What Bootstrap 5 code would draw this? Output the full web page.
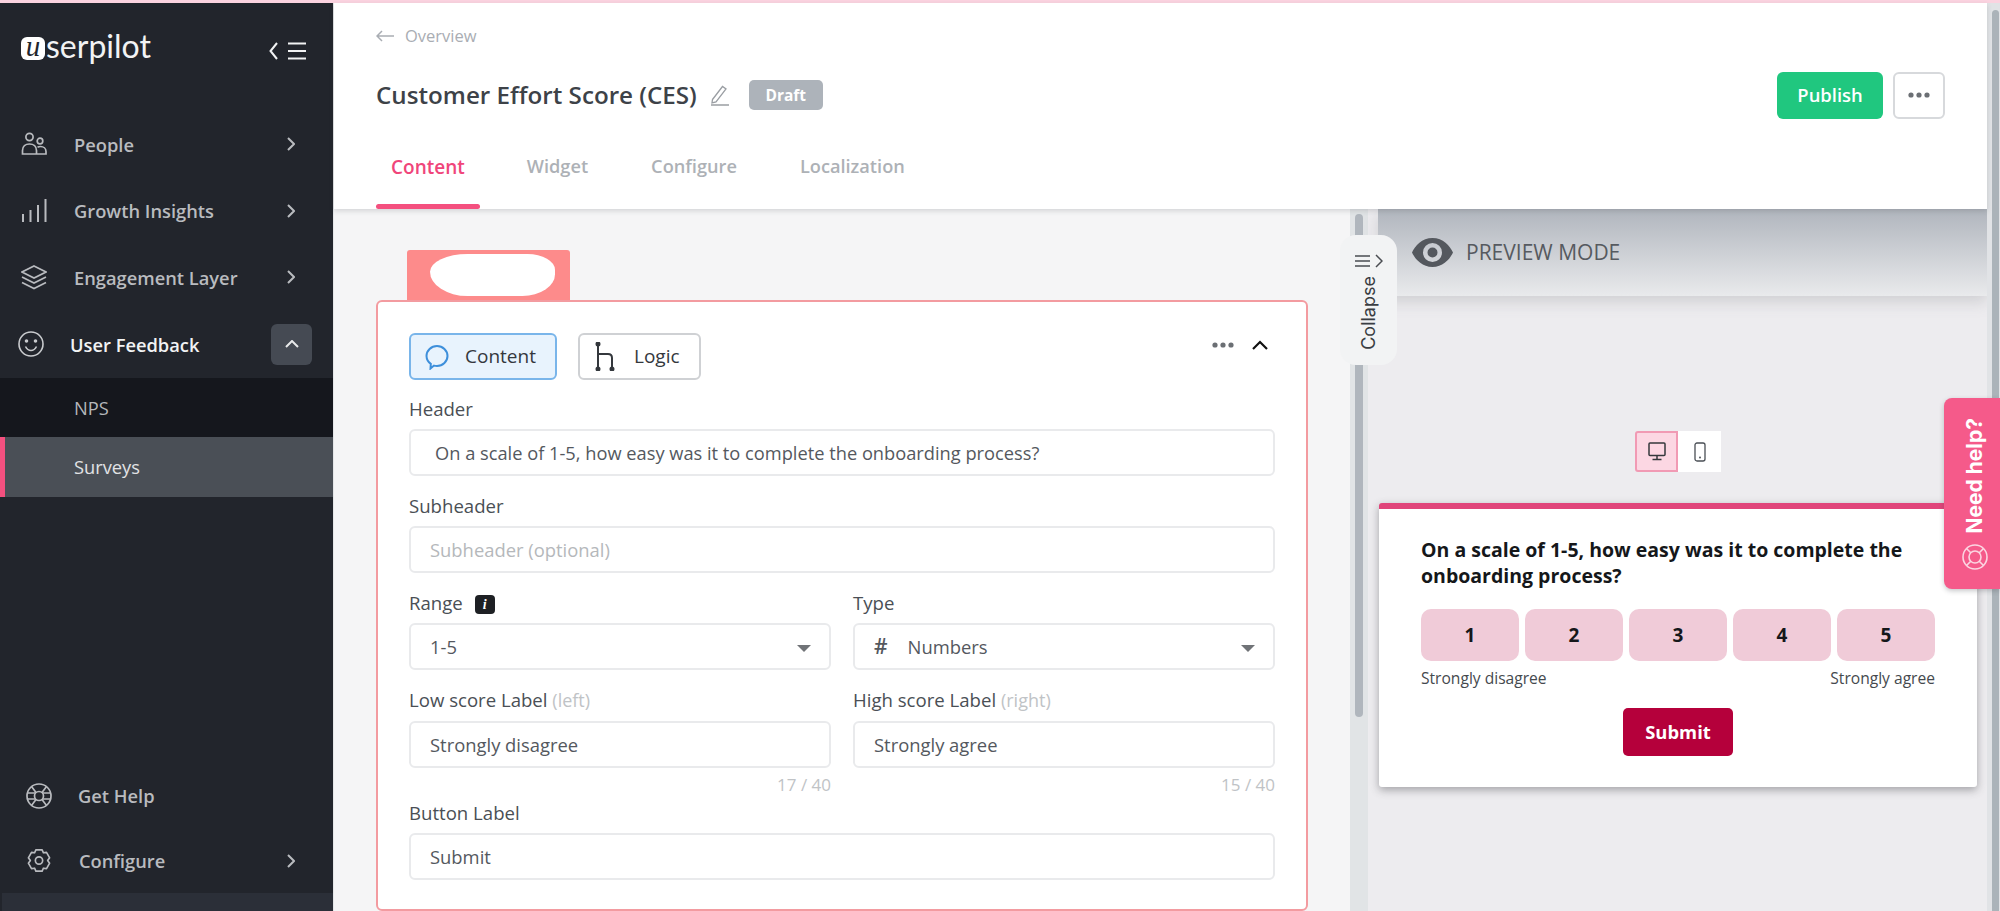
<!DOCTYPE html>
<html lang="en">
<head>
<meta charset="UTF-8">
<title>Customer Effort Score (CES)</title>
<link href="https://cdn.jsdelivr.net/npm/bootstrap@5.3.3/dist/css/bootstrap.min.css" rel="stylesheet">
<style>
    html, body { height: 100%; overflow: hidden; }
    body { font-family: "Open Sans", sans-serif; background: #f5f5f6; color: #4a4f55; }
    .top-strip { height: 3px; background: #fbd3e0; }
    .app-shell { height: 908px; }

    /* Sidebar */
    .side { width: 334px; flex: none; background: #22252c; border-right: 1px solid #e4e6e8; }
    .brand-row { height: 108px; padding: 24px 26px 0 21px; }
    .brand-mark { width: 24px; height: 23px; margin-top: 10px; border-radius: 6px; background: #fff; color: #22252c; font: italic 400 29px/19px "Liberation Serif", serif; text-align: center; }
    .brand-name { font: 400 32px/38px Lato, sans-serif; color: #f2f3f4; margin-left: 1px; }
    .brand-toggle { margin-top: 14px; }
    .side-row { height: 66.5px; color: #b9bbbf; font-size: 18.3px; font-weight: 600; padding: 0 38px 0 21px; }
    .side-row .row-ico { width: 26px; margin-right: 27px; flex: none; }
    .side-row.open { height: 67.5px; color: #f2f3f4; padding-left: 18px; padding-right: 21px; }
    .side-row.open .row-ico { margin-right: 26px; }
    .up-btn { width: 41px; height: 41px; border-radius: 6px; background: #454a53; }
    .sub-row { height: 59px; padding-left: 74px; font-size: 18.3px; font-weight: 500; }
    .sub-npss { background: #15171d; color: #b4b6ba; }
    .sub-active { background: #4a4f56; color: #e2e3e5; border-left: 5px solid #f4507f; padding-left: 69px; height: 60px; }
    .side-foot .side-row { height: 65px; padding-left: 26px; }
    .side-foot .row-ico { margin-right: 26px; }
    .cfg-label { margin-left: 1px; }
    .side-bar-end { height: 18px; background: #2b2f38; margin-left: 2px; }

    /* Header */
    .page-head { height: 206px; flex: none; background: #fff; box-shadow: 0 2px 5px rgba(60, 64, 70, .18); padding: 0 42px 0 42px; position: relative; z-index: 2; }
    .crumb { height: 66px; padding-top: 23px; color: #a9adb3; font-size: 16.5px; line-height: 20px; }
    .crumb svg { margin: 4px 11px 0 0; }
    .title-row { height: 52px; }
    .page-title { font-size: 24.2px; font-weight: 600; color: #3d4248; margin: 0 14px 0 0; }
    .draft-tag { background: #adb3ba; color: #fff; font-size: 15.5px; font-weight: 700; border-radius: 5px; padding: 0; width: 74px; height: 30px; line-height: 30px; margin-left: 20px; }
    .btn-publish { width: 106px; height: 47px; background: #20c77f; color: #fff; border: 0; border-radius: 6px; font-size: 18.4px; font-weight: 600; padding: 0; }
    .btn-more { width: 52px; height: 47px; background: #fff; border: 2px solid #d7d9dc; border-radius: 6px; padding: 0; margin-left: 10px; }
    .head-tabs { margin-top: 23px; }
    .head-tab { height: 65px; padding: 9px 15px 0; margin-right: 33px; font-size: 18.2px; font-weight: 600; color: #adb1b6; text-decoration: none; }
    .head-tab.on { font-size: 19px; margin-right: 32px; color: #f0457a; position: relative; }
    .head-tab.on::after { content: ""; position: absolute; left: 0; right: 0; bottom: 0; height: 5px; border-radius: 3px; background: #f4507f; }

    /* Editor pane */
    .edit-pane { width: 1016px; flex: none; padding: 41px 0 0 42px; background: #f5f5f6; }
    .red-tab { width: 163px; height: 50px; margin-left: 31px; background: #fd8b8b; border-radius: 3px 3px 0 0; padding: 4px 15px 4px 23px; }
    .red-tab div { width: 100%; height: 100%; background: #fff; border-radius: 30% 22% 26% 30% / 42% 38% 52% 58%; }
    .edit-card { width: 932px; height: 611px; background: #fff; border: 2px solid #f39ba0; border-radius: 6px; padding: 31px 31px 0; }
    .seg-row { margin-bottom: 18px; }
    .btn-seg { height: 47px; display: flex; align-items: center; padding: 0; border-radius: 6px; font-size: 19px; font-weight: 500; color: #34383d; background: #fff; border: 2px solid #cfd1d4; }
    .btn-seg.on { width: 148px; background: #e8f3fd; border-color: #79b5ea; padding-left: 13px; gap: 15px; }
    .btn-seg.off { width: 123px; padding-left: 15px; gap: 19px; margin-left: 21px; }
    .card-tools { gap: 18px; padding: 7px 7px 0 0; }
    .fld-label { height: 22px; line-height: 22px; margin-bottom: 9px; font-size: 18.6px; font-weight: 500; color: #4a4f55; display: block; }
    .fld-label span { color: #c0c3c6; font-weight: 400; font-size: 18px; }
    .fld-label.wide-gap { margin-bottom: 10px; }
    .fld-input.form-control, .fld-input.form-select { height: 47px; padding: 0 19px; border: 2px solid #e9eaec; border-radius: 6px; font-size: 18.4px; color: #54585e; }
    .fld-input.form-control::placeholder { color: #b5b8bb; }
    .fld-first.form-control { padding-left: 24px; font-size: 18.25px; }
    .fld-gap { margin-bottom: 19px; }
    .fld-input.form-select { background-image: none; display: flex; align-items: center; position: relative; }
    .fld-input.form-select::after { content: ""; position: absolute; right: 18px; top: 20px; border: 7px solid transparent; border-top: 7px solid #707377; border-bottom: 0; }
    .fld-row { --bs-gutter-x: 22px; }
    .info-tag { width: 20px; height: 19px; margin-left: 7px; border-radius: 4px; background: #1e2024; color: #fff; font: italic 700 14px/19px "Liberation Serif", serif; text-align: center; display: inline-block; vertical-align: 1px; }
    .hash-mark { margin-right: 20px; font-size: 21px; font-weight: 600; }
    .char-count { height: 22px; margin-top: 6px; margin-bottom: 5.5px; font-size: 17px; color: #c0c3c6; text-align: right; line-height: 22px; }

    /* Scrollbars */
    .mid-scroll { width: 18px; flex: none; background: #e1e4e6; padding: 5px 5px 0 5px; }
    .mid-thumb { height: 503px; background: #b0b6bd; border-radius: 4px; }
    .win-scroll { width: 13px; flex: none; background: #e1e3e6; padding: 7px 1px 0 5px; }
    .win-thumb { height: 100%; background: #abb3b9; border-radius: 4px 4px 0 0; }

    /* Preview */
    .prev-pane { flex: 1; background: #edecef; }
    .prev-head { height: 87px; margin-left: 10px; padding-left: 34px; background: linear-gradient(#b0b5bd, #e9eaec); box-shadow: 0 6px 14px rgba(120, 122, 128, .25); font-size: 21px; color: #565a60; gap: 13px; }
    .dev-switch { margin: 135px 0 31px 267px; }
    .dev-btn { width: 43px; height: 41px; background: #fff; }
    .dev-btn.on { background: #fcd7e3; border: 2px solid #f19ab4; border-radius: 3px 0 0 3px; }
    .survey-card { width: 598px; height: 284px; margin-left: 11px; background: #fff; border-top: 6px solid #e0447a; border-radius: 3px; box-shadow: 0 3px 9px rgba(70, 72, 78, .45); padding: 28px 42px 0; }
    .survey-q { font-size: 19.5px; line-height: 26px; font-weight: 700; color: #15171a; margin: 0 0 20px; }
    .score-row { gap: 6px; }
    .score-btn { flex: 1; height: 52px; background: #f0cbd8; border: 0; border-radius: 10px; font-size: 19px; font-weight: 700; color: #15171a; padding: 0; }
    .score-labels { font-size: 15.6px; color: #45494e; margin-top: 7px; height: 20px; line-height: 20px; }
    .btn-submit { width: 110px; height: 48px; margin-top: 20px; background: #b5003b; color: #fff; border: 0; border-radius: 5px; font-size: 18.4px; font-weight: 700; padding: 0; }

    /* Overlays */
    .collapse-tab { position: absolute; left: 1340px; top: 232px; width: 57px; height: 130px; background: #f2f3f4; border-radius: 16px; z-index: 3; padding-top: 19px; }
    .collapse-text { writing-mode: vertical-rl; transform: rotate(180deg); font: 400 18px/22px Inter, sans-serif; color: #3a3d42; margin-top: 8px; }
    .help-tab { position: absolute; left: 1944px; top: 395px; width: 56px; height: 191px; background: #f55a8a; border-radius: 8px 0 0 8px; z-index: 4; padding: 20px 0 19px 6px; box-shadow: 0 2px 5px rgba(70, 72, 78, .3); }
    .help-text { writing-mode: vertical-rl; transform: rotate(180deg); font: 700 21px/24px Inter, sans-serif; color: #fff; }
</style>
</head>
<body>
    <div class="top-strip"></div>
    <div class="app-shell d-flex position-relative">

        <!-- Sidebar -->
        <aside class="side d-flex flex-column">
            <div class="brand-row d-flex align-items-start">
                <span class="brand-mark">u</span>
                <span class="brand-name">serpilot</span>
                <svg class="ms-auto brand-toggle" width="38" height="20" viewBox="0 0 38 20" fill="none" stroke="#f2f3f4" stroke-width="2"><path d="M8 2 1.500 10 8 18"/><path d="M19 2.500h18M19 10h18M19 17.500h18"/></svg>
            </div>
            <div class="side-row d-flex align-items-center">
                <svg class="row-ico" height="24" viewBox="0 0 26 24" fill="none" stroke="#b9bbbf" stroke-width="1.700"><circle cx="8.500" cy="5" r="3.600"/><circle cx="19" cy="9" r="2.800"/><path d="M1.500 22v-3.500c0-4 3-6.500 7-6.500s7 2.500 7 6.500V22zM15.500 22H25v-2.500c0-3-2.500-5-5.500-5-1.200 0-2.200.3-3 .8"/></svg>
                <span>People</span>
                <svg class="ms-auto" width="8" height="14" viewBox="0 0 8 14" fill="none" stroke="#b9bbbf" stroke-width="2"><path d="m1 1 6 6-6 6"/></svg>
            </div>
            <div class="side-row d-flex align-items-center">
                <svg class="row-ico" height="25" viewBox="0 0 26 25" fill="none" stroke="#b9bbbf" stroke-width="2"><path d="M2 24v-8M9.500 24V12M17 24V7M24.500 24V1"/></svg>
                <span>Growth Insights</span>
                <svg class="ms-auto" width="8" height="14" viewBox="0 0 8 14" fill="none" stroke="#b9bbbf" stroke-width="2"><path d="m1 1 6 6-6 6"/></svg>
            </div>
            <div class="side-row d-flex align-items-center">
                <svg class="row-ico" height="25" viewBox="0 0 26 25" fill="none" stroke="#b9bbbf" stroke-width="1.700"><path d="m13 1 12 6-12 6L1 7zM1 12l12 6 12-6M1 17.500l12 6 12-6"/></svg>
                <span>Engagement Layer</span>
                <svg class="ms-auto" width="8" height="14" viewBox="0 0 8 14" fill="none" stroke="#b9bbbf" stroke-width="2"><path d="m1 1 6 6-6 6"/></svg>
            </div>
            <div class="side-row open d-flex align-items-center">
                <svg class="row-ico" height="26" viewBox="0 0 26 26" fill="none" stroke="#c9cbce" stroke-width="1.600"><circle cx="13" cy="13" r="12"/><circle cx="8.500" cy="10" r="1" fill="#c9cbce"/><circle cx="17.500" cy="10" r="1" fill="#c9cbce"/><path d="M7.500 15.500c1.500 3 3.500 4 5.500 4s4-1 5.500-4"/></svg>
                <span>User Feedback</span>
                <span class="up-btn ms-auto d-flex align-items-center justify-content-center">
                    <svg width="14" height="8" viewBox="0 0 14 8" fill="none" stroke="#e8e9ea" stroke-width="2"><path d="m1 7 6-6 6 6"/></svg>
                </span>
            </div>
            <div class="sub-row sub-npss d-flex align-items-center">NPS</div>
            <div class="sub-row sub-active d-flex align-items-center">Surveys</div>

            <div class="side-foot mt-auto">
                <div class="side-row d-flex align-items-center">
                    <svg class="row-ico" height="26" viewBox="0 0 26 26" fill="none" stroke="#b9bbbf" stroke-width="1.700"><circle cx="13" cy="13" r="12"/><circle cx="13" cy="13" r="4.500"/><path d="M5.500 3.500 10 9.500M20.500 3.500 16 9.500M5.500 22.500l4.500-6M20.500 22.500l-4.500-6M1.500 10h8M16.500 10h8M1.500 16h8M16.500 16h8"/></svg>
                    <span>Get Help</span>
                </div>
                <div class="side-row d-flex align-items-center">
                    <svg class="row-ico" height="25" viewBox="0 0 24 24" fill="none" stroke="#b9bbbf" stroke-width="1.600" stroke-linejoin="round"><path d="M9 1.800h6l1.200 2.800 3-.4 3 5.200-1.900 2.600 1.900 2.600-3 5.200-3-.4L15 22.200H9l-1.200-2.800-3 .4-3-5.200 1.900-2.600-1.900-2.600 3-5.200 3 .4z"/><circle cx="12" cy="12" r="3.500"/></svg>
                    <span class="cfg-label">Configure</span>
                    <svg class="ms-auto" width="8" height="14" viewBox="0 0 8 14" fill="none" stroke="#b9bbbf" stroke-width="2"><path d="m1 1 6 6-6 6"/></svg>
                </div>
                <div class="side-bar-end"></div>
            </div>
        </aside>

        <!-- Main -->
        <div class="d-flex flex-column flex-grow-1">
            <header class="page-head">
                <div class="crumb d-flex align-items-start">
                    <svg width="18" height="12" viewBox="0 0 18 12" fill="none" stroke="#a9adb3" stroke-width="1.500"><path d="M6 1 1 6l5 5M1 6h17"/></svg>
                    <span>Overview</span>
                </div>
                <div class="title-row d-flex align-items-center">
                    <h1 class="page-title">Customer Effort Score (CES)</h1>
                    <svg width="18" height="22" viewBox="0 0 18 22" fill="none" stroke="#9a9ea3" stroke-width="1.300"><path d="M1.500 15.500 11.500 2.500l3.500 2.500L5 18l-4 1zM0 21h18"/></svg>
                    <span class="badge draft-tag">Draft</span>
                    <button class="btn btn-publish ms-auto">Publish</button>
                    <button class="btn btn-more d-flex align-items-center justify-content-center">
                        <svg width="22" height="6" viewBox="0 0 22 6" fill="#6b6f74"><circle cx="3" cy="3" r="2.600"/><circle cx="11" cy="3" r="2.600"/><circle cx="19" cy="3" r="2.600"/></svg>
                    </button>
                </div>
                <nav class="head-tabs d-flex">
                    <a class="head-tab on">Content</a>
                    <a class="head-tab">Widget</a>
                    <a class="head-tab">Configure</a>
                    <a class="head-tab">Localization</a>
                </nav>
            </header>

            <div class="d-flex flex-grow-1 overflow-hidden">
                <section class="edit-pane">
                    <div class="red-tab"><div></div></div>
                    <div class="edit-card">
                        <div class="seg-row d-flex align-items-start">
                            <button class="btn btn-seg on">
                                <svg width="26" height="26" viewBox="0 0 26 26" fill="none" stroke="#3d8fdb" stroke-width="2"><path d="M13 2a10.500 10 0 0 1 0 20c-1 0-2-.1-3-.4l-3.500 2.900.3-4.700A9.800 9.800 0 0 1 2.500 12 10.500 10 0 0 1 13 2z"/></svg>
                                Content
                            </button>
                            <button class="btn btn-seg off">
                                <svg width="20" height="29" viewBox="0 0 20 29" fill="none" stroke="#34383d" stroke-width="2"><path d="M3 2v25M3 12h10c3 0 4 2 4 4v11"/><circle cx="3" cy="2" r="1.500" fill="#34383d"/><circle cx="3" cy="27" r="1.500" fill="#34383d"/><circle cx="17" cy="27" r="1.500" fill="#34383d"/></svg>
                                Logic
                            </button>
                            <div class="card-tools ms-auto d-flex align-items-center">
                                <svg width="22" height="6" viewBox="0 0 22 6" fill="#6b6f74"><circle cx="3" cy="3" r="2.600"/><circle cx="11" cy="3" r="2.600"/><circle cx="19" cy="3" r="2.600"/></svg>
                                <svg width="16" height="10" viewBox="0 0 16 10" fill="none" stroke="#111" stroke-width="2.200"><path d="m1 9 7-7 7 7"/></svg>
                            </div>
                        </div>

                        <label class="fld-label">Header</label>
                        <input class="form-control fld-input fld-gap fld-first" value="On a scale of 1-5, how easy was it to complete the onboarding process?">

                        <label class="fld-label">Subheader</label>
                        <input class="form-control fld-input fld-gap" placeholder="Subheader (optional)">

                        <div class="row fld-row">
                            <div class="col-6 fld-gap">
                                <label class="fld-label">Range <i class="info-tag">i</i></label>
                                <div class="form-select fld-input">1-5</div>
                            </div>
                            <div class="col-6 fld-gap">
                                <label class="fld-label">Type</label>
                                <div class="form-select fld-input"><span class="hash-mark">#</span>Numbers</div>
                            </div>
                            <div class="col-6">
                                <label class="fld-label wide-gap">Low score Label <span>(left)</span></label>
                                <input class="form-control fld-input" value="Strongly disagree">
                                <div class="char-count">17 / 40</div>
                            </div>
                            <div class="col-6">
                                <label class="fld-label wide-gap">High score Label <span>(right)</span></label>
                                <input class="form-control fld-input" value="Strongly agree">
                                <div class="char-count">15 / 40</div>
                            </div>
                        </div>

                        <label class="fld-label">Button Label</label>
                        <input class="form-control fld-input" value="Submit">
                    </div>
                </section>

                <div class="mid-scroll"><div class="mid-thumb"></div></div>

                <section class="prev-pane">
                    <div class="prev-head d-flex align-items-center">
                        <svg width="41" height="29" viewBox="0 0 41 29"><path fill="#54585e" fill-rule="evenodd" d="M20.500 0C31 0 38 8 41 14.500 38 21 31 29 20.500 29S3 21 0 14.500C3 8 10 0 20.500 0zm0 5a9.500 9.500 0 1 0 0 19 9.500 9.500 0 0 0 0-19zm0 4.500a5 5 0 1 1 0 10 5 5 0 0 1 0-10z"/></svg>
                        <span>PREVIEW MODE</span>
                    </div>
                    <div class="dev-switch d-flex">
                        <span class="dev-btn on d-flex align-items-center justify-content-center">
                            <svg width="18" height="19" viewBox="0 0 18 19" fill="none" stroke="#34383d" stroke-width="1.500"><rect x="1" y="1" width="16" height="12.500" rx="1"/><path d="M9 13.500V17M4.500 17.500h9"/></svg>
                        </span>
                        <span class="dev-btn d-flex align-items-center justify-content-center">
                            <svg width="12" height="20" viewBox="0 0 12 20" fill="none" stroke="#4a4f55" stroke-width="1.300"><rect x="1" y="1" width="10" height="18" rx="2"/><circle cx="6" cy="15.500" r=".4"/></svg>
                        </span>
                    </div>
                    <div class="survey-card">
                        <p class="survey-q">On a scale of 1-5, how easy was it to complete the onboarding process?</p>
                        <div class="score-row d-flex">
                            <button class="btn score-btn">1</button>
                            <button class="btn score-btn">2</button>
                            <button class="btn score-btn">3</button>
                            <button class="btn score-btn">4</button>
                            <button class="btn score-btn">5</button>
                        </div>
                        <div class="score-labels d-flex justify-content-between"><span>Strongly disagree</span><span>Strongly agree</span></div>
                        <div class="text-center"><button class="btn btn-submit">Submit</button></div>
                    </div>
                </section>
            </div>
        </div>

        <div class="win-scroll"><div class="win-thumb"></div></div>

        <!-- Overlays -->
        <div class="collapse-tab d-flex flex-column align-items-center">
            <svg width="28" height="14" viewBox="0 0 28 14" fill="none" stroke="#4a4d52" stroke-width="1.500"><path d="M0 2h15M0 7h15M0 12h15M21 1l6 6-6 6"/></svg>
            <span class="collapse-text">Collapse</span>
        </div>
        <div class="help-tab d-flex flex-column align-items-center justify-content-between">
            <span class="help-text">Need help?</span>
            <svg width="26" height="26" viewBox="0 0 26 26" fill="none" stroke="#fbd5e1" stroke-width="1.600"><circle cx="13" cy="13" r="12"/><circle cx="13" cy="13" r="6"/><path d="M4.500 4.500 9 9M21.500 4.500 17 9M4.500 21.500 9 17M21.500 21.500 17 17"/></svg>
        </div>
    </div>

    <script src="https://cdn.jsdelivr.net/npm/bootstrap@5.3.3/dist/js/bootstrap.bundle.min.js"></script>
</body>
</html>
